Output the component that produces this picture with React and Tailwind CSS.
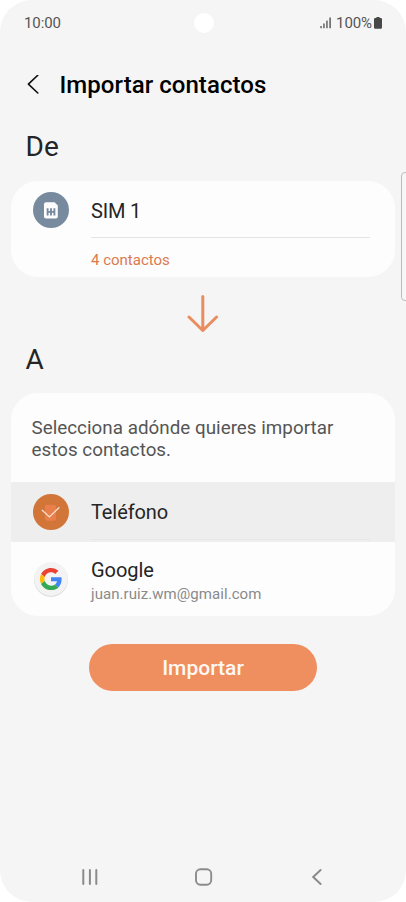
function SignalIcon() {
  return (
    <svg width="12" height="12" viewBox="0 0 12 12" className="text-[#666]" fill="currentColor">
      <rect x="0.3" y="9" width="1.5" height="2.2" />
      <rect x="3.2" y="6.5" width="1.5" height="4.7" />
      <rect x="6.2" y="3.6" width="1.5" height="7.6" />
      <rect x="9.3" y="0.5" width="1.6" height="10.7" />
    </svg>
  )
}

function BatteryIcon() {
  return (
    <svg width="8" height="12" viewBox="0 0 8 12" fill="#484848">
      <path d="M2.4 0h3.2v1.1H6.8A1.2 1.2 0 0 1 8 2.3v8.3A1.2 1.2 0 0 1 6.8 11.8H1.2A1.2 1.2 0 0 1 0 10.6V2.3A1.2 1.2 0 0 1 1.2 1.1h1.2z" />
    </svg>
  )
}

function SimIcon() {
  return (
    <svg width="36" height="36" viewBox="0 0 36 36">
      <circle cx="18" cy="18" r="18" fill="#788a9e" />
      <path d="M13 10.3h8.6l3.2 3.2v11a2 2 0 0 1-2 2H13a2 2 0 0 1-2-2V12.3a2 2 0 0 1 2-2z" fill="#fdfdfd" />
      <path d="M14.6 16.3v7.2M18 16.3v7.2M21.4 16.3v7.2" stroke="#788a9e" strokeWidth="1.9" fill="none" />
      <path d="M14.6 19.9h6.8" stroke="#788a9e" strokeWidth="1.6" fill="none" />
    </svg>
  )
}

function PhoneIcon() {
  return (
    <svg width="36" height="36" viewBox="0 0 36 36">
      <circle cx="18" cy="18" r="18" fill="#d17539" />
      <rect x="11.9" y="10.7" width="11.2" height="16" rx="2" fill="#e97f4b" />
      <path d="M9.2 16.2l7.2 6.7 9.5-9.2" stroke="#fbe3d6" strokeWidth="1.2" fill="none" strokeLinecap="round" strokeLinejoin="round" />
    </svg>
  )
}

function GoogleIcon() {
  return (
    <svg width="36" height="36" viewBox="0 0 36 36">
      <circle cx="18" cy="18.7" r="17.1" fill="#d9d9d9" />
      <circle cx="18" cy="18" r="16.9" fill="#f3f3f3" />
      <g transform="translate(6.9 6.9) scale(0.4625)">
        <path fill="#EA4335" d="M24 9.5c3.54 0 6.71 1.22 9.21 3.6l6.85-6.85C35.9 2.38 30.47 0 24 0 14.62 0 6.51 5.38 2.56 13.22l7.98 6.19C12.43 13.72 17.74 9.5 24 9.5z" />
        <path fill="#4285F4" d="M46.98 24.55c0-1.57-.15-3.09-.38-4.55H24v9.02h12.94c-.58 2.96-2.26 5.48-4.78 7.18l7.73 6c4.51-4.18 7.09-10.36 7.09-17.65z" />
        <path fill="#FBBC05" d="M10.53 28.59c-.48-1.45-.76-2.99-.76-4.59s.27-3.14.76-4.59l-7.98-6.19C.92 16.46 0 20.12 0 24c0 3.88.92 7.54 2.56 10.78l7.97-6.19z" />
        <path fill="#34A853" d="M24 48c6.48 0 11.93-2.13 15.89-5.81l-7.73-6c-2.15 1.45-4.92 2.3-8.16 2.3-6.26 0-11.57-4.22-13.47-9.91l-7.98 6.19C6.51 42.62 14.62 48 24 48z" />
      </g>
    </svg>
  )
}

function StatusBar() {
  return (
    <div className="grid h-[46px] grid-cols-3 items-center pl-6 pr-6 text-[15px] tracking-[-0.1px] text-[#555]">
      <span className="pt-px">10:00</span>
      <span className="ml-0.5 size-5 justify-self-center rounded-full bg-white" />
      <div className="flex items-center justify-end">
        <SignalIcon />
        <span className="ml-1 pt-px">100%</span>
        <span className="ml-0.5"><BatteryIcon /></span>
      </div>
    </div>
  )
}

function NavBar() {
  return (
    <nav className="mt-auto flex h-[50px] items-center justify-between pl-[81px] pr-[80px]">
      <svg width="18" height="18" viewBox="0 0 18 18" stroke="#8b8b8b" strokeWidth="2" strokeLinecap="round">
        <path d="M2.3 2v14M8.9 2v14M15.3 2v14" />
      </svg>
      <svg width="18" height="18" viewBox="0 0 18 18" fill="none" stroke="#8b8b8b" strokeWidth="1.9">
        <rect x="1" y="1.3" width="15.2" height="15.4" rx="4.4" />
      </svg>
      <svg width="18" height="18" viewBox="0 0 18 18" fill="none" stroke="#8b8b8b" strokeWidth="2" strokeLinecap="round">
        <path d="M12.6 2L5.2 9l7.4 7" />
      </svg>
    </nav>
  )
}

export default function App() {
  return (
    <div className="h-[902px] w-[406px] bg-white font-[Roboto,sans-serif]">
      <div className="relative flex h-full flex-col overflow-hidden rounded-[32px] bg-[#f5f5f5]">
        <StatusBar />

        <header className="flex h-[78px] items-center pl-[27px]">
          <svg width="12" height="20" viewBox="0 0 12 20" fill="none" stroke="#111" strokeWidth="1.6" strokeLinecap="round" strokeLinejoin="round">
            <path d="M10.8 0.2L1.4 9.1l9.4 8.9" />
          </svg>
          <h1 className="ml-[20.5px] text-[24px] font-medium tracking-[0.05px] text-black">Importar contactos</h1>
        </header>

        <h2 className="h-[57px] pl-[25.5px] text-[28px] leading-[45px] text-[#252525]">De</h2>
        <section className="mx-[11px] h-24 rounded-[27px] bg-[#fdfdfd] pl-[22px] pr-[25px]">
          <div className="flex gap-[22px]">
            <div className="pt-[11px]"><SimIcon /></div>
            <div className="flex-1">
              <p className="h-[57px] border-b border-[#e4e4e4] text-[20px] leading-[60px] tracking-[-0.2px] text-[#252525]">SIM 1</p>
              <p className="text-[15px] leading-[44px] text-[#db7a4d]">4 contactos</p>
            </div>
          </div>
        </section>

        <div className="flex justify-center pr-px pt-[18px]">
          <svg width="32" height="38" viewBox="0 0 32 38" fill="none" stroke="#e98d60" strokeWidth="3" strokeLinecap="round" strokeLinejoin="round">
            <path d="M15.8 1.5v34M2 22l13.8 13.5L29.6 22" />
          </svg>
        </div>

        <h2 className="h-[60px] pl-[25.5px] text-[28px] leading-[54px] text-[#252525]">A</h2>
        <section className="mx-[11px] overflow-hidden rounded-[27px] bg-[#fdfdfd]">
          <p className="h-[89px] pl-[20.5px] pt-6 text-[18.8px] leading-[22px] tracking-[0.03px] text-[#555]">
            Selecciona adónde quieres importar
            <br />
            estos contactos.
          </p>
          <div className="flex h-[60px] gap-[22px] bg-[#eeeeee] pl-[22px] pr-[25px]">
            <div className="pt-3"><PhoneIcon /></div>
            <p className="h-[58px] flex-1 border-b border-[#e7e7e7] text-[20px] leading-[61px] tracking-[-0.1px] text-[#252525]">Teléfono</p>
          </div>
          <div className="flex h-[74px] items-center gap-[22px] pl-[22px]">
            <GoogleIcon />
            <div className="pt-[5px]">
              <p className="text-[20px] leading-6 tracking-[-0.05px] text-[#252525]">Google</p>
              <p className="text-[15px] leading-6 tracking-[0.06px] text-[#8a8a8a]">juan.ruiz.wm@gmail.com</p>
            </div>
          </div>
        </section>

        <button className="ml-[89px] mt-7 h-[47px] w-[228px] rounded-full bg-[#ef8f60] pt-0.5 text-[21px] font-medium text-[#fff8f3]">
          Importar
        </button>

        <NavBar />

        {/* edge panel handle */}
        <div className="absolute -right-1 top-[172px] h-[129px] w-[9px] rounded-[4px] border border-[#bdbdbd] bg-[#f7f7f7]" />
      </div>
    </div>
  )
}
